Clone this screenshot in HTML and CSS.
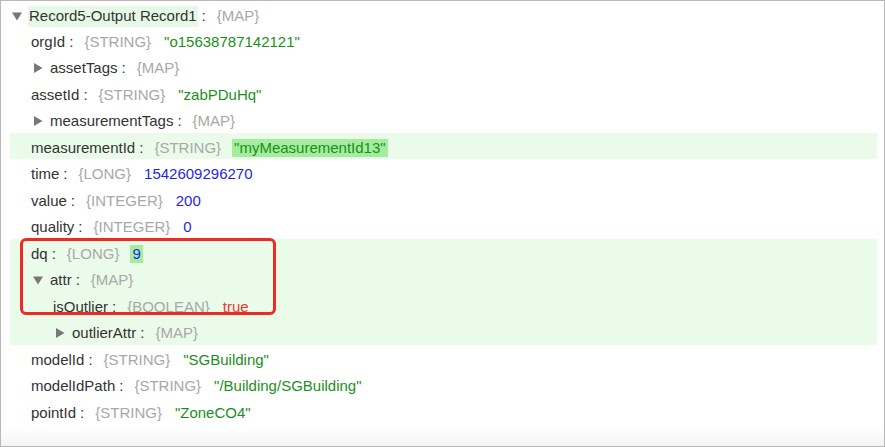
FILE: index.html
```html
<!DOCTYPE html>
<html>
<head>
    <title>Record Viewer</title>
    <link rel="stylesheet" href="styles.css">
</head>
<body>
    <div class="tree">
        <div class="row root d0">
            <svg class="toggle" viewBox="0 0 10 10"><polygon points="0,1.5 10,1.5 5,9.5"/></svg>
            <span class="key key-hl">Record5-Output Record1</span><span class="colon">:</span><span class="type">{MAP}</span>
        </div>

        <div class="row d1"><span class="key">orgId</span><span class="colon">:</span><span class="type">{STRING}</span><span class="val str">"o15638787142121"</span></div>
        <div class="row d1">
            <svg class="toggle" viewBox="0 0 10 10"><polygon points="1,0 9.5,5 1,10"/></svg>
            <span class="key">assetTags</span><span class="colon">:</span><span class="type">{MAP}</span>
        </div>
        <div class="row d1"><span class="key">assetId</span><span class="colon">:</span><span class="type">{STRING}</span><span class="val str">"zabPDuHq"</span></div>
        <div class="row d1">
            <svg class="toggle" viewBox="0 0 10 10"><polygon points="1,0 9.5,5 1,10"/></svg>
            <span class="key">measurementTags</span><span class="colon">:</span><span class="type">{MAP}</span>
        </div>
        <div class="row d1 changed"><span class="key">measurementId</span><span class="colon">:</span><span class="type">{STRING}</span><span class="val str val-hl">"myMeasurementId13"</span></div>
        <div class="row d1"><span class="key">time</span><span class="colon">:</span><span class="type">{LONG}</span><span class="val num">1542609296270</span></div>
        <div class="row d1"><span class="key">value</span><span class="colon">:</span><span class="type">{INTEGER}</span><span class="val num">200</span></div>
        <div class="row d1"><span class="key">quality</span><span class="colon">:</span><span class="type">{INTEGER}</span><span class="val num">0</span></div>

        <div class="group changed">
            <div class="row d1"><span class="key">dq</span><span class="colon">:</span><span class="type">{LONG}</span><span class="val num val-hl">9</span></div>
            <div class="row d1">
                <svg class="toggle" viewBox="0 0 10 10"><polygon points="0,1.5 10,1.5 5,9.5"/></svg>
                <span class="key">attr</span><span class="colon">:</span><span class="type">{MAP}</span>
            </div>
            <div class="row d2"><span class="key">isOutlier</span><span class="colon">:</span><span class="type">{BOOLEAN}</span><span class="val bool">true</span></div>
            <div class="row d2">
                <svg class="toggle" viewBox="0 0 10 10"><polygon points="1,0 9.5,5 1,10"/></svg>
                <span class="key">outlierAttr</span><span class="colon">:</span><span class="type">{MAP}</span>
            </div>
            <div class="mark"></div>
        </div>

        <div class="row d1"><span class="key">modelId</span><span class="colon">:</span><span class="type">{STRING}</span><span class="val str">"SGBuilding"</span></div>
        <div class="row d1"><span class="key">modelIdPath</span><span class="colon">:</span><span class="type">{STRING}</span><span class="val str">"/Building/SGBuilding"</span></div>
        <div class="row d1"><span class="key">pointId</span><span class="colon">:</span><span class="type">{STRING}</span><span class="val str">"ZoneCO4"</span></div>
    </div>
</body>
</html>
```

FILE: styles.css
```css
body {
    margin: 0;
    padding: 0;
    font-family: "Liberation Sans", Arial, sans-serif;
    font-size: 15px;
    color: #333;
    background-color: #fff;
}

.tree {
    box-sizing: border-box;
    width: 885px;
    height: 447px;
    border: 1px solid #b8b8b8;
    padding: 0 7px 0 9px;
    background: linear-gradient(to bottom, #fff calc(100% - 18px), #f4f4f4);
}

.row {
    display: flex;
    align-items: center;
    box-sizing: border-box;
    height: 26.5px;
    padding-top: 3px;
    line-height: 23.5px;
    white-space: nowrap;
}

.root {
    height: 25.75px;
    padding-top: 5px;
    line-height: 20.75px;
}

.d0 { padding-left: 0; }
.d1 { padding-left: 21px; }
.d2 { padding-left: 43px; }

.toggle {
    width: 10px;
    height: 10px;
    margin: 0 7px 0 2px;
    fill: #777;
    flex: none;
}

.key {
    color: #333;
}

.key-hl {
    background-color: #e6f9e6;
    padding: 0 1px;
    margin-left: -1px;
}

.colon {
    margin-left: 4px;
    color: #333;
}

.type {
    margin-left: 11px;
    color: #a8a8a8;
}

.val {
    margin-left: 13px;
}

.str { color: #1b8f1b; }
.num { color: #1f1ff2; }
.bool { color: #ec3a33; }

.val-hl {
    background-color: #a4ed9f;
    padding: 0 2px;
    margin-left: 11px;
    line-height: 18px;
}

.changed {
    background-color: #eafbea;
}

.group {
    position: relative;
}

.mark {
    position: absolute;
    left: 10px;
    top: -1px;
    width: 256px;
    height: 77px;
    box-sizing: border-box;
    border: 3px solid #ef2a22;
    border-radius: 6px;
}
```
